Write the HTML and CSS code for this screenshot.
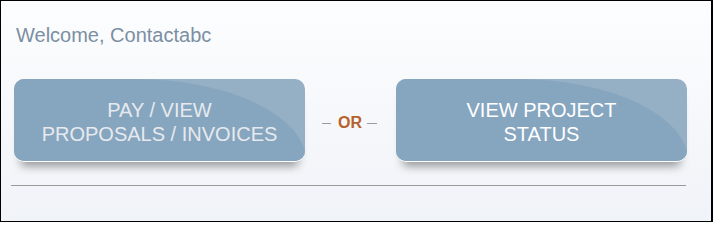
FILE: index.html
```html
<!DOCTYPE html>
<html>
<head>
<meta charset="utf-8">
<link rel="stylesheet" href="styles.css">
</head>
<body>
<div class="frame">
  <div class="welcome">Welcome, Contactabc</div>
  <div class="actions">
    <a class="btn btn-pay" href="#"><span class="btn-label">PAY / VIEW<br>PROPOSALS / INVOICES</span></a>
    <div class="or-group">
      <span class="dash dash-left"></span>
      <span class="or">OR</span>
      <span class="dash dash-right"></span>
    </div>
    <a class="btn btn-status" href="#"><span class="btn-label">VIEW PROJECT<br>STATUS</span></a>
  </div>
  <div class="rule"></div>
</div>
</body>
</html>
```
FILE: styles.css
```css
html, body {
  margin: 0;
  padding: 0;
}
body {
  font-family: "Liberation Sans", Arial, sans-serif;
}
.frame {
  box-sizing: border-box;
  width: 713px;
  height: 222px;
  border-style: solid;
  border-color: #000;
  border-width: 1px 2px 1px 1px;
  background: linear-gradient(to bottom, #fcfdfe 0%, #f0f3f8 100%);
  padding-top: 22px;
  overflow: hidden;
}
.welcome {
  margin-left: 15px;
  font-size: 20px;
  line-height: 24px;
  color: #7c8fa2;
}
.actions {
  display: flex;
  align-items: center;
  margin-top: 32px;
  margin-left: 13px;
}
.btn {
  position: relative;
  display: flex;
  align-items: center;
  justify-content: center;
  box-sizing: border-box;
  width: 291px;
  height: 82px;
  padding-top: 3px;
  border-radius: 10px;
  background: #95afc5;
  text-decoration: none;
  text-align: center;
  overflow: hidden;
  box-shadow: 0 1px 0 #ffffff, 0 12px 10px -7px rgba(0, 0, 0, 0.4);
}
.btn::before {
  content: "";
  position: absolute;
  left: -20px;
  top: 0;
  width: 312px;
  height: 120px;
  border-top-right-radius: 172px 82px;
  background: #86a5bf;
}
.btn-label {
  position: relative;
  font-size: 20px;
  line-height: 24px;
}
.btn-pay .btn-label {
  color: #e6eaee;
}
.btn-status .btn-label {
  color: #ffffff;
}
.or-group {
  display: flex;
  align-items: center;
  box-sizing: border-box;
  width: 91px;
  padding-left: 17px;
  margin-top: 6px;
}
.dash {
  display: block;
  height: 1px;
  background: #9c9c9c;
}
.dash-left {
  width: 9px;
  margin-right: 7px;
}
.dash-right {
  width: 10px;
  margin-left: 5px;
}
.or {
  font-size: 16px;
  line-height: 16px;
  font-weight: bold;
  color: #b7612c;
}
.rule {
  margin-top: 24px;
  margin-left: 10px;
  width: 675px;
  height: 1px;
  background: #9a9a9a;
}
```
